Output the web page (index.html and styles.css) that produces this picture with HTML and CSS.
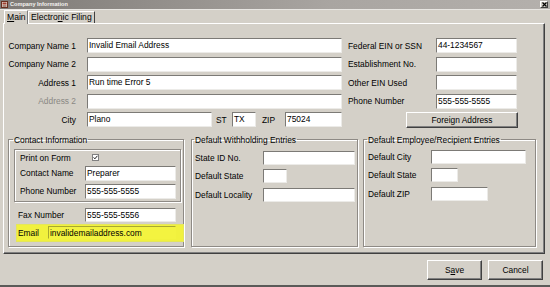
FILE: index.html
```html
<!DOCTYPE html>
<html>
<head>
<meta charset="utf-8">
<link rel="stylesheet" href="styles.css">
</head>
<body>
<div class="window">
  <div class="titlebar">
    <svg class="ticon" width="7" height="7" viewBox="0 0 7 7"><rect x="0.5" y="0.5" width="6" height="6" fill="#e8e0d8" stroke="#6a3020"/><rect x="1.5" y="1.5" width="4" height="2" fill="#a04030"/><rect x="1.5" y="4.5" width="4" height="1" fill="#6a3020"/></svg>
    <span class="ttext">Company Information</span>
    <span class="tclose"><svg width="5" height="5" viewBox="0 0 5 5"><path d="M0.5 0.5L4.5 4.5M4.5 0.5L0.5 4.5" stroke="#000" stroke-width="1.2"/></svg></span>
  </div>
  <div class="tabs">
    <div class="tab active"><u>M</u>ain</div>
    <div class="tab">Electro<u>n</u>ic Filing</div>
  </div>
  <div class="panel">
    <div class="top">
      <div class="lbl r">Company Name 1</div><div class="cell"><div class="field w255">Invalid Email Address</div></div>
      <div class="lbl">Federal EIN or SSN</div><div class="field w81">44-1234567</div>

      <div class="lbl r">Company Name 2</div><div class="cell"><div class="field w255"></div></div>
      <div class="lbl">Establishment No.</div><div class="field w81"></div>

      <div class="lbl r">Address 1</div><div class="cell"><div class="field w255">Run time Error 5</div></div>
      <div class="lbl">Other EIN Used</div><div class="field w81"></div>

      <div class="lbl r dis">Address 2</div><div class="cell"><div class="field w255"></div></div>
      <div class="lbl">Phone Number</div><div class="field w81">555-555-5555</div>

      <div class="lbl r">City</div>
      <div class="cell cityrow">
        <div class="field wcity">Plano</div>
        <div class="lbl st">ST</div>
        <div class="field wst">TX</div>
        <div class="lbl zip">ZIP</div>
        <div class="field wzip">75024</div>
      </div>
      <div class="btn foreign">Foreign Address</div>
    </div>

    <div class="groups">
      <fieldset class="grp contact">
        <legend>Contact Information</legend>
        <div class="subbox">
          <div class="printrow">
            <span class="plabel">Print on Form</span>
            <svg class="chk" width="7" height="7" viewBox="0 0 7 7"><rect x="0.5" y="0.5" width="6" height="6" fill="#fff" stroke="#808080"/><path d="M1.6 3.4L2.9 4.8L5.4 1.8" fill="none" stroke="#000" stroke-width="0.9"/></svg>
          </div>
          <div class="frow"><span class="flabel">Contact Name</span><div class="field w91">Preparer</div></div>
          <div class="frow"><span class="flabel">Phone Number</span><div class="field w91">555-555-5555</div></div>
        </div>
        <div class="faxrow"><span class="faxlabel">Fax Number</span><div class="field w91 h14">555-555-5556</div></div>
        <div class="emailrow"><span class="elabel">Email</span><div class="field efield">invalidemailaddress.com</div></div>
      </fieldset>

      <fieldset class="grp withh">
        <legend>Default Withholding Entries</legend>
        <div class="grow"><span class="glabel gl68">State ID No.</span><div class="field h14 w92"></div></div>
        <div class="grow"><span class="glabel gl68">Default State</span><div class="field h14 w24"></div></div>
        <div class="grow"><span class="glabel gl68">Default Locality</span><div class="field h14 w92"></div></div>
      </fieldset>

      <fieldset class="grp emp">
        <legend>Default Employee/Recipient Entries</legend>
        <div class="grow"><span class="glabel gl63">Default City</span><div class="field h14 w95"></div></div>
        <div class="grow"><span class="glabel gl63">Default State</span><div class="field h14 w27"></div></div>
        <div class="grow"><span class="glabel gl63">Default ZIP</span><div class="field h14 w57"></div></div>
      </fieldset>
    </div>
  </div>
  <div class="buttons">
    <div class="btn bbtn">S<u>a</u>ve</div>
    <div class="btn bbtn">Cancel</div>
  </div>
</div>
</body>
</html>
```

FILE: styles.css
```css
* { box-sizing: border-box; margin: 0; padding: 0; }
html, body { width: 550px; height: 287px; overflow: hidden; }
body {
  background: #d4d0c8;
  font-family: "Liberation Sans", Arial, sans-serif;
  font-size: 8.4px;
  color: #000;
}
.window {
  height: 287px;
  display: flex;
  flex-direction: column;
  border-bottom: 2px solid #5a5a58;
}
.titlebar {
  height: 9px;
  flex: none;
  display: flex;
  align-items: center;
  padding: 0 2px 0 1px;
  background: linear-gradient(to right, #7e7a76, #a9a5a1 60%, #b4b0ac);
  color: #f4f2f0;
  font-size: 5.6px;
  font-weight: bold;
  line-height: 9px;
}
.ticon { flex: none; }
.ttext { margin-left: 2px; flex: 1; }
.tclose {
  width: 8px; height: 7px;
  background: #d4d0c8;
  border: 1px solid;
  border-color: #fff #404040 #404040 #fff;
  display: flex; align-items: center; justify-content: center;
}
.tabs {
  height: 14px;
  flex: none;
  display: flex;
  align-items: flex-end;
  padding-left: 4px;
  border-top: 1px solid #e8e6e2;
}
.tab {
  height: 12px;
  padding: 0 2px 0 2px;
  border-top: 1px solid #fff;
  border-left: 1px solid #fff;
  border-right: 1px solid #404040;
  line-height: 11px;
  font-size: 8.6px;
  background: #d4d0c8;
}
.tab.active {
  height: 14px;
  margin-bottom: -1px;
  padding-top: 1px;
  width: 24px;
  position: relative;
  z-index: 1;
  border-right: 1px solid #808080;
}
.panel {
  flex: none;
  margin-left: 3px;
  width: 542px;
  height: 231px;
  border: 1px solid;
  border-color: #fff #404040 #404040 #fff;
  box-shadow: inset -1px -1px 0 #808080;
  padding: 14px 0 0 4px;
}
.top {
  display: grid;
  grid-template-columns: 79px 261px 88px 81px;
  grid-auto-rows: 15px;
  row-gap: 3.6px;
  align-items: center;
}
.lbl { white-space: nowrap; }
.lbl.r { text-align: right; padding-right: 11px; }
.dis { color: #8a8884; }
.cell { display: flex; align-items: center; }
.field {
  height: 15px;
  background: #fff;
  border: 1px solid;
  border-color: #7c7a76 #ecebe8 #ecebe8 #7c7a76;
  padding-left: 1px;
  line-height: 13px;
  white-space: nowrap;
  overflow: hidden;
}
.w255 { width: 255px; }
.w81 { width: 81px; }
.w91 { width: 91px; }
.w92 { width: 92px; }
.w24 { width: 24px; }
.w95 { width: 95px; }
.w27 { width: 27px; }
.w57 { width: 57px; }
.h14 { height: 14px; line-height: 12px; }
.wcity { width: 125px; }
.st { width: 16px; margin-left: 4px; }
.wst { width: 24px; }
.zip { width: 23px; margin-left: 6px; }
.wzip { width: 57px; }
.btn {
  background: #d4d0c8;
  border: 1px solid;
  border-color: #fff #404040 #404040 #fff;
  box-shadow: inset -1px -1px 0 #808080;
  text-align: center;
  white-space: nowrap;
}
.foreign {
  grid-column: 3 / 5;
  justify-self: end;
  margin-right: -1px;
  width: 112px;
  height: 16px;
  line-height: 14px;
}
.groups {
  display: flex;
  margin-top: 7.6px;
}
.grp {
  height: 112px;
  border: 1px solid #8e8a85;
  box-shadow: inset 1px 1px 0 #fff, 1px 1px 0 #fff;
  min-width: 0;
}
.grp legend {
  line-height: 10px;
  padding: 0 1px;
  margin-left: 3px;
  white-space: nowrap;
}
.contact { width: 176px; }
.contact legend { margin-left: 4px; }
.withh { width: 167px; margin-left: 7px; }
.withh legend { margin-left: 2px; }
.emp { width: 173px; margin-left: 5px; }
.emp legend { margin-left: 3px; }
.subbox {
  margin: 4px 0 0 5px;
  width: 167px;
  border: 1px solid #8e8a85;
  box-shadow: inset 1px 1px 0 #fff, 1px 1px 0 #fff;
  padding: 3px 0 2px 5px;
}
.printrow { height: 10px; display: flex; align-items: center; }
.plabel { width: 72px; }
.chk { display: block; }
.frow { display: flex; align-items: center; margin-top: 3px; }
.flabel { width: 65px; white-space: nowrap; }
.faxrow { display: flex; align-items: center; margin-top: 6px; padding-left: 9px; }
.faxlabel { width: 67px; white-space: nowrap; }
.emailrow {
  display: flex;
  align-items: center;
  margin: 2px 0 0 7px;
  width: 168px;
  height: 18px;
  padding-left: 2px;
  background: #f1f13e;
  box-shadow: inset 0 0 0 1px #e4e65a;
}
.elabel { width: 30px; }
.efield {
  width: 128px;
  height: 13px;
  line-height: 12px;
  background: #f3f340;
  border-color: #a8a830 #f3f340 #f3f340 #a8a830;
}
.grow { display: flex; align-items: center; margin-top: 4.5px; }
.withh .grow:first-of-type { margin-top: 6px; }
.emp .grow:first-of-type { margin-top: 5px; }
.withh .grow { padding-left: 3px; }
.emp .grow { padding-left: 4px; }
.glabel { white-space: nowrap; }
.gl68 { width: 68px; }
.gl63 { width: 63px; }
.buttons {
  flex: 1;
  display: flex;
  justify-content: flex-end;
  align-items: flex-start;
  gap: 6px;
  padding: 6px 7px 0 0;
}
.bbtn {
  width: 55px;
  height: 20px;
  line-height: 18px;
}
```
